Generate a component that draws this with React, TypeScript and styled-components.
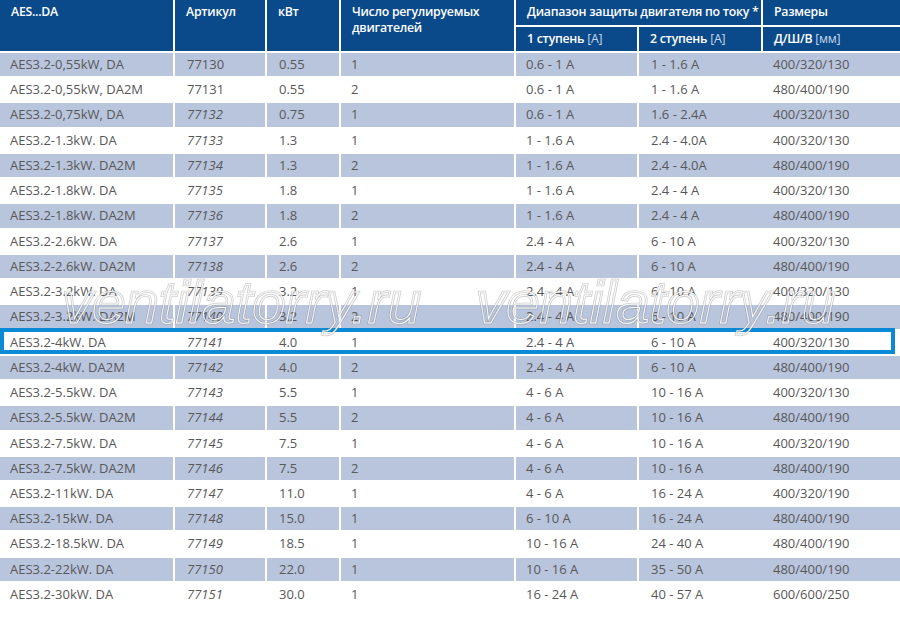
import React from "react";
import styled, { createGlobalStyle, css } from "styled-components";

const Global = createGlobalStyle`
  html, body { margin: 0; padding: 0; background: #fff; }
  body { font-family: "Open Sans", "Noto Sans", sans-serif; }
`;

const COLS = "173px 90px 72px 173px 121px 122px 137px";

const Page = styled.div`
  position: relative;
  width: 900px;
  height: 618px;
  overflow: hidden;
  background: #fff;
`;

const Header = styled.div`
  display: grid;
  grid-template-columns: ${COLS};
  grid-template-rows: 25px 24px;
  gap: 2px;
  background: #fff;
`;

const HeadCell = styled.div<{ $col: string; $row: string }>`
  grid-column: ${(p) => p.$col};
  grid-row: ${(p) => p.$row};
  background: #0b4a8a;
  color: #fff;
  font-size: 12.3px;
  font-weight: 600;
  letter-spacing: -0.25px;
  line-height: 16px;
  padding: 4px 2px 0 11px;
  white-space: nowrap;
`;

const Unit = styled.span`
  font-weight: 400;
  color: #c9d6ea;
`;

const Body = styled.div`
  display: flex;
  flex-direction: column;
  gap: 2px;
  margin-top: 2px;
`;

const Row = styled.div<{ $shaded: boolean; $highlight?: boolean }>`
  position: relative;
  display: grid;
  grid-template-columns: ${COLS};
  column-gap: 2px;
  height: 23.24px;
  --row-bg: ${(p) => (p.$shaded ? "#b9c5dd" : "#fff")};
  ${(p) =>
    p.$highlight &&
    css`
      &::after {
        content: "";
        position: absolute;
        left: 0;
        right: 5px;
        top: -3px;
        bottom: 0;
        border: 4px solid #0a8ad6;
        pointer-events: none;
      }
    `}
`;

const Cell = styled.div<{ $italic?: boolean; $join?: boolean }>`
  background: var(--row-bg);
  color: #585858;
  font-size: 13px;
  line-height: 23px;
  padding-left: ${(p) => (p.$join ? "12px" : "10px")};
  white-space: nowrap;
  font-style: ${(p) => (p.$italic ? "italic" : "normal")};
  ${(p) => p.$join && css`margin-right: -2px;`}
`;

const NumCell = styled(Cell)`
  padding-left: 12px;
`;

const Watermark = styled.div<{ $left: number }>`
  position: absolute;
  left: ${(p) => p.$left}px;
  top: 268px;
  font-family: "Liberation Sans", Arial, sans-serif;
  font-style: italic;
  font-size: 60px;
  line-height: 70px;
  color: transparent;
  -webkit-text-stroke: 2.6px rgba(130, 130, 130, 0.4);
  pointer-events: none;
  white-space: nowrap;
  &::after {
    content: "ventilatorry.ru";
    position: absolute;
    left: 0;
    top: 0;
    -webkit-text-stroke: 1px rgba(255, 255, 255, 0.95);
  }
`;

type R = [string, string, string, string, string, string, string];

const rows: R[] = [
  ["AES3.2-0,55kW, DA", "77130", "0.55", "1", "0.6 - 1 A", "1 - 1.6 A", "400/320/130"],
  ["AES3.2-0,55kW, DA2M", "77131", "0.55", "2", "0.6 - 1 A", "1 - 1.6 A", "480/400/190"],
  ["AES3.2-0,75kW, DA", "77132", "0.75", "1", "0.6 - 1 A", "1.6 - 2.4A", "400/320/130"],
  ["AES3.2-1.3kW. DA", "77133", "1.3", "1", "1 - 1.6 A", "2.4 - 4.0A", "400/320/130"],
  ["AES3.2-1.3kW. DA2M", "77134", "1.3", "2", "1 - 1.6 A", "2.4 - 4.0A", "480/400/190"],
  ["AES3.2-1.8kW. DA", "77135", "1.8", "1", "1 - 1.6 A", "2.4 - 4 A", "400/320/130"],
  ["AES3.2-1.8kW. DA2M", "77136", "1.8", "2", "1 - 1.6 A", "2.4 - 4 A", "480/400/190"],
  ["AES3.2-2.6kW. DA", "77137", "2.6", "1", "2.4 - 4 A", "6 - 10 A", "400/320/130"],
  ["AES3.2-2.6kW. DA2M", "77138", "2.6", "2", "2.4 - 4 A", "6 - 10 A", "480/400/190"],
  ["AES3.2-3.2kW. DA", "77139", "3.2", "1", "2.4 - 4 A", "6 - 10 A", "400/320/130"],
  ["AES3.2-3.2kW. DA2M", "77140", "3.2", "2", "2.4 - 4 A", "6 - 10 A", "480/400/190"],
  ["AES3.2-4kW. DA", "77141", "4.0", "1", "2.4 - 4 A", "6 - 10 A", "400/320/130"],
  ["AES3.2-4kW. DA2M", "77142", "4.0", "2", "2.4 - 4 A", "6 - 10 A", "480/400/190"],
  ["AES3.2-5.5kW. DA", "77143", "5.5", "1", "4 - 6 A", "10 - 16 A", "400/320/130"],
  ["AES3.2-5.5kW. DA2M", "77144", "5.5", "2", "4 - 6 A", "10 - 16 A", "480/400/190"],
  ["AES3.2-7.5kW. DA", "77145", "7.5", "1", "4 - 6 A", "10 - 16 A", "400/320/190"],
  ["AES3.2-7.5kW. DA2M", "77146", "7.5", "2", "4 - 6 A", "10 - 16 A", "480/400/190"],
  ["AES3.2-11kW. DA", "77147", "11.0", "1", "4 - 6 A", "16 - 24 A", "400/320/190"],
  ["AES3.2-15kW. DA", "77148", "15.0", "1", "6 - 10 A", "16 - 24 A", "480/400/190"],
  ["AES3.2-18.5kW. DA", "77149", "18.5", "1", "10 - 16 A", "24 - 40 A", "480/400/190"],
  ["AES3.2-22kW. DA", "77150", "22.0", "1", "10 - 16 A", "35 - 50 A", "480/400/190"],
  ["AES3.2-30kW. DA", "77151", "30.0", "1", "16 - 24 A", "40 - 57 A", "600/600/250"],
];

export default function App() {
  return (
    <Page>
      <Global />
      <Header>
        <HeadCell $col="1" $row="1 / 3">AES...DA</HeadCell>
        <HeadCell $col="2" $row="1 / 3">Артикул</HeadCell>
        <HeadCell $col="3" $row="1 / 3">кВт</HeadCell>
        <HeadCell $col="4" $row="1 / 3">
          Число регулируемых
          <br />
          двигателей
        </HeadCell>
        <HeadCell $col="5 / 7" $row="1">Диапазон защиты двигателя по току *</HeadCell>
        <HeadCell $col="7" $row="1">Размеры</HeadCell>
        <HeadCell $col="5" $row="2">
          1 ступень <Unit>[A]</Unit>
        </HeadCell>
        <HeadCell $col="6" $row="2">
          2 ступень <Unit>[A]</Unit>
        </HeadCell>
        <HeadCell $col="7" $row="2">
          Д/Ш/В <Unit>[мм]</Unit>
        </HeadCell>
      </Header>
      <Body>
        {rows.map((r, i) => (
          <Row key={r[1]} $shaded={i % 2 === 0} $highlight={r[1] === "77141"}>
            <Cell>{r[0]}</Cell>
            <NumCell $italic={i >= 2}>{r[1]}</NumCell>
            <NumCell>{r[2]}</NumCell>
            <Cell>{r[3]}</Cell>
            <Cell>{r[4]}</Cell>
            <Cell $join>{r[5]}</Cell>
            <Cell>{r[6]}</Cell>
          </Row>
        ))}
      </Body>
      <Watermark $left={62}>ventilatorry.ru</Watermark>
      <Watermark $left={476}>ventilatorry.ru</Watermark>
    </Page>
  );
}
